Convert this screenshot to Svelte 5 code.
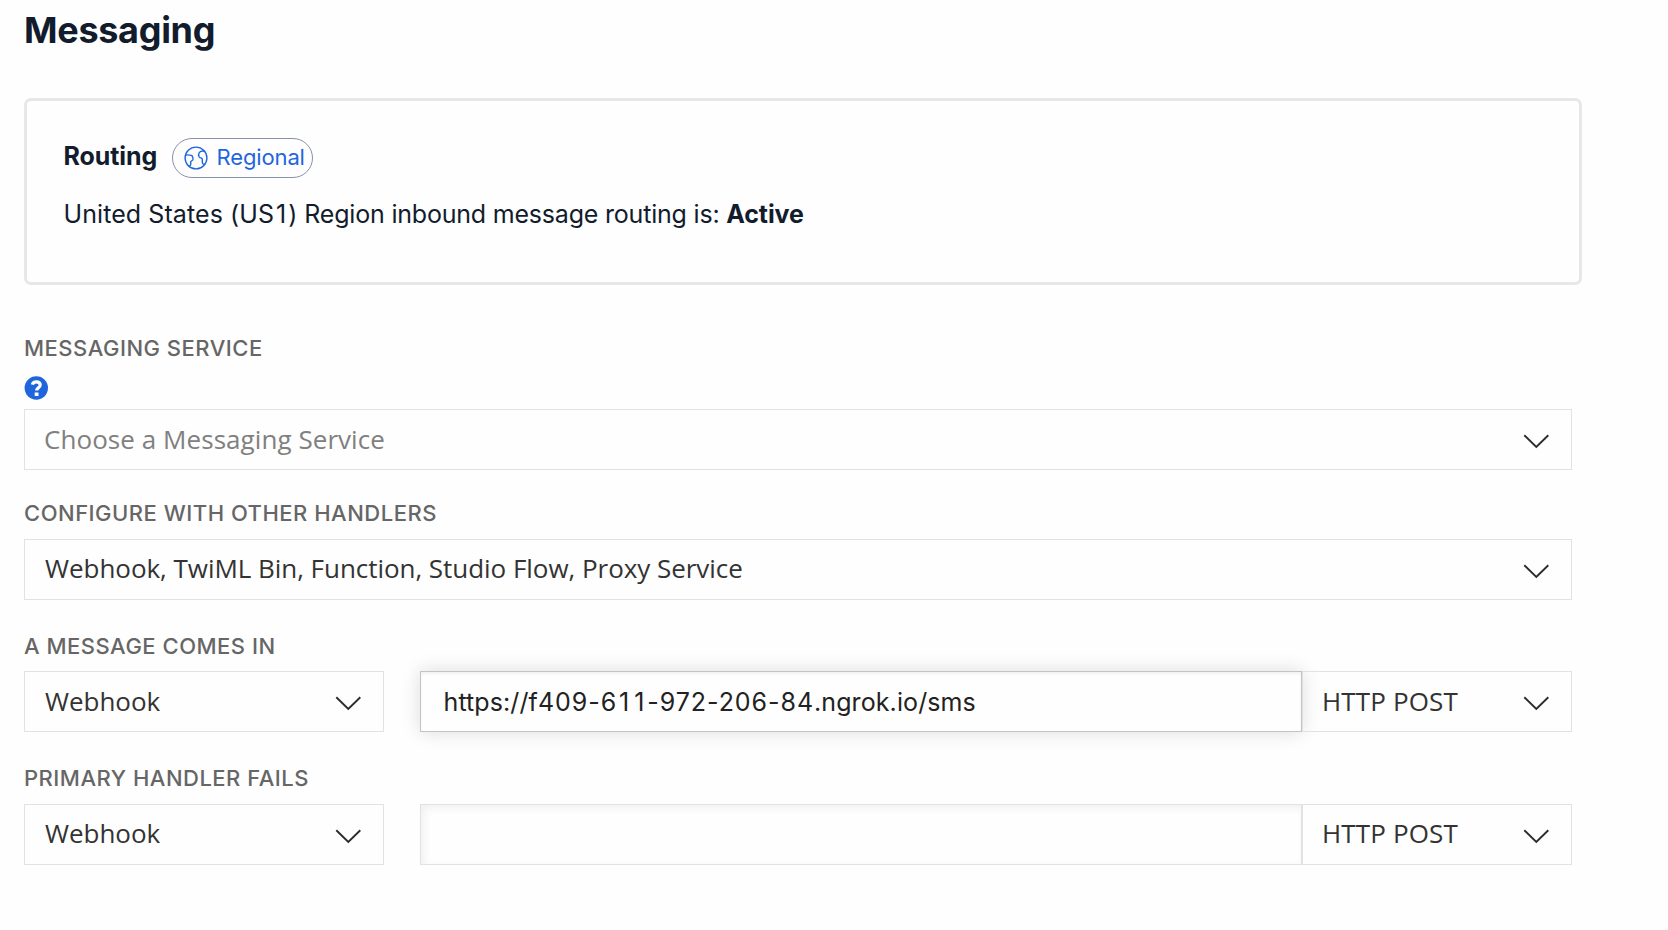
<script>
  const handlers = [
    { label: 'A MESSAGE COMES IN', type: 'Webhook', url: 'https://f409-611-972-206-84.ngrok.io/sms', method: 'HTTP POST', active: true },
    { label: 'PRIMARY HANDLER FAILS', type: 'Webhook', url: '', method: 'HTTP POST', active: false }
  ];

  // Digit runs are set a little wider, and the narrow figure 1 is padded out to match the other digits.
  const splitDigits = (text) => text.split(/(1|[02-9-]+)/).filter(Boolean);
</script>

{#snippet select(text, kind = '')}
  <div class="select {kind}">
    <span>{text}</span>
    <svg class="chevron" viewBox="0 0 26 15" aria-hidden="true">
      <path d="M1.3 1.2 13.3 13 25.3 1.2" />
    </svg>
  </div>
{/snippet}

<main>
  <h1>Messaging</h1>

  <section class="card">
    <div class="card-head">
      <h2>Routing</h2>
      <span class="badge">
        <svg class="globe" viewBox="0 0 24 24" aria-hidden="true">
          <circle cx="12" cy="12" r="10.9" />
          <path d="M1.6 9.2C3.6 8.6 6 9 8 9.7c.7.9 1.2 2.4 1 3.7-.3 1.3-2 1.4-2.3 2.6-.2 1 .4 2.2-.2 3.1-.5.7-1.3.8-2.2.9" />
          <path d="M20.4 5.2c-1.8-.3-3.9-.1-5 1.2-.9 1.2-.9 3.3-.2 4.6.7 1.2 2.3.7 2.9 1.7.6 1.3-.2 3.3.5 4.6.4.7 1.1.9 1.9 1" />
        </svg>
        <span class="badge-text">Regional</span>
      </span>
    </div>
    <p><span class="region">United States (US<span class="one">1</span>)</span> Region inbound message routing is: <strong>Active</strong></p>
  </section>

  <div class="label">MESSAGING SERVICE</div>
  <svg class="help" viewBox="0 0 24 24" aria-hidden="true">
    <circle cx="12.3" cy="12" r="11.7" />
    <path d="M8.4 8.6C8.8 6.8 10.3 5.8 12.3 5.8c2.3 0 3.9 1.2 3.9 3.1 0 2.7-3.6 2.8-3.6 5.6" />
    <rect x="10.7" y="16.5" width="3.8" height="3.5" />
  </svg>
  {@render select('Choose a Messaging Service', 'placeholder')}

  <div class="label second">CONFIGURE WITH OTHER HANDLERS</div>
  {@render select('Webhook, TwiML Bin, Function, Studio Flow, Proxy Service', 'other')}

  {#each handlers as h}
    <div class="label handler">{h.label}</div>
    <div class="row">
      {@render select(h.type)}
      <div class="field" class:active={h.active}>{#each splitDigits(h.url) as part}<span class:num={/^[\d-]/.test(part)} class:one={part === '1'}>{part}</span>{/each}</div>
      {@render select(h.method, 'method')}
    </div>
  {/each}
</main>

<style>
  :global(body) {
    background: #fefefe;
  }
  main {
    box-sizing: border-box;
    width: 1582px;
    height: 930px;
    padding: 10px 0 0 24px;
    font-family: Inter, sans-serif;
    color: #121c2d;
  }
  h1 {
    margin: 0;
    font-size: 36px;
    line-height: 40px;
    font-weight: 700;
    letter-spacing: -0.3px;
  }
  .card {
    box-sizing: border-box;
    height: 187px;
    margin-top: 48px;
    padding: 37px 36px 0 36.5px;
    border: 3px solid #e6e7e9;
    border-radius: 7px;
  }
  .card-head {
    display: flex;
    align-items: center;
    gap: 15px;
    height: 40px;
  }
  h2 {
    margin: 0 0 4px;
    font-size: 25px;
    line-height: 30px;
    font-weight: 700;
    letter-spacing: -0.1px;
  }
  .badge {
    box-sizing: border-box;
    display: flex;
    align-items: center;
    gap: 9px;
    width: 141px;
    height: 40px;
    padding-left: 10.5px;
    border: 1px solid #8891aa;
    border-radius: 20px;
    font-size: 22px;
    letter-spacing: -0.15px;
    color: #1f66dd;
  }
  .badge-text {
    margin-bottom: 2px;
  }
  .globe {
    width: 24px;
    height: 24px;
    margin-bottom: 1px;
    fill: none;
    stroke: #1f66dd;
    stroke-width: 1.4;
    stroke-linejoin: round;
  }
  p {
    margin: 21px 0 0;
    font-size: 25px;
    line-height: 30px;
    letter-spacing: -0.2px;
  }
  .region {
    letter-spacing: 0.08px;
  }
  .one {
    padding: 0 2px;
  }
  strong {
    font-weight: 700;
    letter-spacing: -0.1px;
  }
  .label {
    margin-top: 50px;
    font-size: 22px;
    line-height: 26px;
    font-weight: 500;
    letter-spacing: 0.5px;
    color: #666;
  }
  .help {
    display: block;
    width: 24px;
    height: 24px;
    margin: 15px 0 9px;
    fill: #1f66dd;
  }
  .help path {
    fill: none;
    stroke: #fff;
    stroke-width: 3.2;
  }
  .help rect {
    fill: #fff;
  }
  .label.second {
    margin: 30px 0 13px;
  }
  .label.handler {
    margin: 33px 0 12px;
  }
  .row + .label.handler {
    margin-bottom: 13px;
  }
  .select {
    box-sizing: border-box;
    display: flex;
    align-items: center;
    justify-content: space-between;
    width: 1548px;
    height: 61px;
    padding: 0 22px 0 20px;
    border: 1px solid #e2e2e2;
    font: 400 26px/36px 'Open Sans', sans-serif;
    color: #333;
  }
  .select span {
    margin-bottom: 2px;
    letter-spacing: -0.04px;
  }
  .select.placeholder {
    padding-left: 19px;
    color: #808080;
  }
  .select.placeholder span {
    margin-bottom: 1px;
    letter-spacing: 0.06px;
  }
  .select.other span {
    margin-bottom: 3px;
  }
  .chevron {
    width: 26px;
    height: 15px;
    margin-top: 3px;
    fill: none;
    stroke: #2b2b2b;
    stroke-width: 1.9;
  }
  .row {
    display: grid;
    grid-template-columns: 396px 882px 270px;
    width: 1548px;
  }
  .row .select {
    width: 360px;
  }
  .row .select.method {
    width: 100%;
    padding-left: 19px;
  }
  .row:last-child .select span {
    margin-bottom: 4px;
  }
  .select.method span {
    letter-spacing: 0.15px;
  }
  .field {
    box-sizing: border-box;
    height: 61px;
    padding: 0 22.5px;
    border: 1px solid #e2e2e2;
    font-size: 25px;
    line-height: 60px;
    letter-spacing: 0.1px;
    color: #222;
    box-shadow: inset 3px 3px 9px rgba(0, 0, 0, 0.06);
  }
  .num {
    letter-spacing: 0.95px;
  }
  .field.active {
    border-color: #c4c4c4;
    box-shadow: 0 0 18px rgba(0, 0, 0, 0.14), inset 0 2px 3px rgba(0, 0, 0, 0.05);
  }
</style>
